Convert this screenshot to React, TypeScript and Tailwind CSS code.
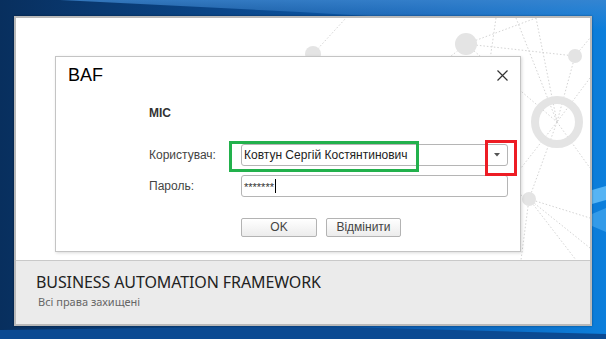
import React from "react"

function Wallpaper() {
  return (
    <svg className="absolute inset-0" width="606" height="339" viewBox="0 0 606 339">
      <defs>
        <linearGradient id="bg" x1="0" y1="0" x2="1" y2="0">
          <stop offset="0" stopColor="#082f5e" />
          <stop offset="0.35" stopColor="#0a4587" />
          <stop offset="0.7" stopColor="#0c5fb4" />
          <stop offset="1" stopColor="#0c7fdc" />
        </linearGradient>
        <linearGradient id="top" x1="0" y1="0" x2="0" y2="1">
          <stop offset="0" stopColor="#3d86cf" stopOpacity="0.8" />
          <stop offset="1" stopColor="#3d86cf" stopOpacity="0" />
        </linearGradient>
      </defs>
      <rect width="606" height="339" fill="url(#bg)" />
      <polygon points="60,0 606,0 606,30 300,12" fill="url(#top)" />
      <polygon points="592,190 606,186 606,200 592,204" fill="#56b4f4" />
      <polygon points="592,214 606,208 606,232 592,226" fill="#3da2ec" opacity="0.8" />
      <polygon points="0,330 300,326 606,334 606,339 0,339" fill="#0b4a92" />
    </svg>
  )
}

function Network() {
  const line = { stroke: "#d4d4d4", strokeWidth: 1, strokeDasharray: "1.5 2", fill: "none" }
  return (
    <svg className="absolute inset-0" width="574" height="242" viewBox="0 0 574 242">
      <g {...line}>
        <path d="M450 26 L559 38" />
        <path d="M450 26 L520 0" />
        <path d="M450 26 L408 60" />
        <path d="M450 26 L541 104" />
        <path d="M480 0 L470 70" />
        <path d="M500 0 L541 104" />
        <path d="M520 0 L541 104" />
        <path d="M559 38 L541 104" />
        <path d="M559 38 L574 20" />
        <path d="M574 60 L541 104" />
        <path d="M541 104 L513 181" />
        <path d="M541 104 L574 150" />
        <path d="M513 181 L574 200" />
        <path d="M513 181 L574 230" />
        <path d="M513 181 L560 242" />
        <path d="M470 160 L513 181" />
        <path d="M513 181 L505 242" />
        <path d="M541 104 L505 150" />
        <path d="M297 36 L330 0" />
      </g>
      <circle cx="297" cy="36" r="8" fill="#e4e4e4" />
      <circle cx="450" cy="26" r="11" fill="#e4e4e4" />
      <circle cx="559" cy="38" r="7" fill="#e4e4e4" />
      <circle cx="541" cy="104" r="22" fill="none" stroke="#e4e4e4" strokeWidth="8" />
      <circle cx="513" cy="181" r="7" fill="#e4e4e4" />
    </svg>
  )
}

export default function App() {
  return (
    <div className="relative w-[606px] h-[339px] overflow-hidden font-['Liberation_Sans',Arial,sans-serif]">
      <Wallpaper />
      <div className="relative pl-[14px] pt-[16px]">
        <div className="w-[578px] h-[310px] border-2 border-[#b9b9b9] bg-white flex flex-col shadow-[0_0_2px_rgba(0,0,0,0.4)]">
          <div className="relative h-[242px]">
            <Network />
            <div className="relative ml-[39px] mt-[38px] w-[466px] h-[196px] bg-white border border-[#c4c4c4] shadow-[1px_1px_3px_rgba(0,0,0,0.15)] flex flex-col">
              <div className="flex items-start justify-between pl-[12px] pr-[12px] pt-[7px]">
                <span className="text-[18px] leading-[22px] text-black">BAF</span>
                <svg width="11" height="11" viewBox="0 0 11 11" className="mt-[6px]">
                  <path d="M0.5 0.5 L10.5 10.5 M10.5 0.5 L0.5 10.5" stroke="#333" strokeWidth="1.2" />
                </svg>
              </div>
              <div className="pl-[93px] mt-[20px] text-[12px] leading-[14px] font-bold text-[#333]">МІС</div>
              <div className="mt-[24px] flex flex-col gap-[9px] pr-[12px]">
                <div className="flex items-center">
                  <span className="w-[92px] ml-[93px] text-[12px] text-[#444]">Користувач:</span>
                  <div className="flex-1 h-[22px] border border-[#b5b5b5] rounded-[3px] flex items-center pl-[2px] pr-[7px]">
                    <span className="flex-1 text-[12px] text-[#222]">Ковтун Сергій Костянтинович</span>
                    <svg width="6" height="4" viewBox="0 0 6 4">
                      <path d="M0 0 L6 0 L3 3.5 Z" fill="#555" />
                    </svg>
                  </div>
                </div>
                <div className="flex items-center">
                  <span className="w-[92px] ml-[93px] text-[12px] text-[#444]">Пароль:</span>
                  <div className="flex-1 h-[22px] border border-[#b5b5b5] rounded-[3px] flex items-center pl-[2px]">
                    <span className="text-[11px] leading-[10px] text-[#333] pt-[2px]">*******</span>
                    <span className="w-px h-[14px] bg-black ml-px" />
                  </div>
                </div>
              </div>
              <div className="mt-[21px] ml-[185px] flex gap-[9px]">
                <button className="w-[76px] h-[19px] border border-[#b3b3b3] rounded-[2px] bg-gradient-to-b from-white to-[#ececec] text-[12px] leading-[17px] text-[#444]">OK</button>
                <button className="w-[75px] h-[19px] border border-[#b3b3b3] rounded-[2px] bg-gradient-to-b from-white to-[#ececec] text-[12px] leading-[17px] text-[#444]">Відмінити</button>
              </div>
              <div className="absolute left-[173px] top-[84px] w-[190px] h-[31px] border-[3px] border-[#22b14c]" />
              <div className="absolute left-[429px] top-[83px] w-[32px] h-[36px] border-[3px] border-[#ed1c24]" />
            </div>
          </div>
          <div className="flex-1 bg-[#ebebeb] border-t border-[#c9c9c9] pl-[20px] pt-[11px] font-['Noto_Sans',sans-serif]">
            <div className="text-[16px] leading-[21px] text-[#222] tracking-[-0.1px]">BUSINESS AUTOMATION FRAMEWORK</div>
            <div className="text-[11px] leading-[18px] text-[#666] ml-[2px]">Всі права захищені</div>
          </div>
        </div>
      </div>
    </div>
  )
}
